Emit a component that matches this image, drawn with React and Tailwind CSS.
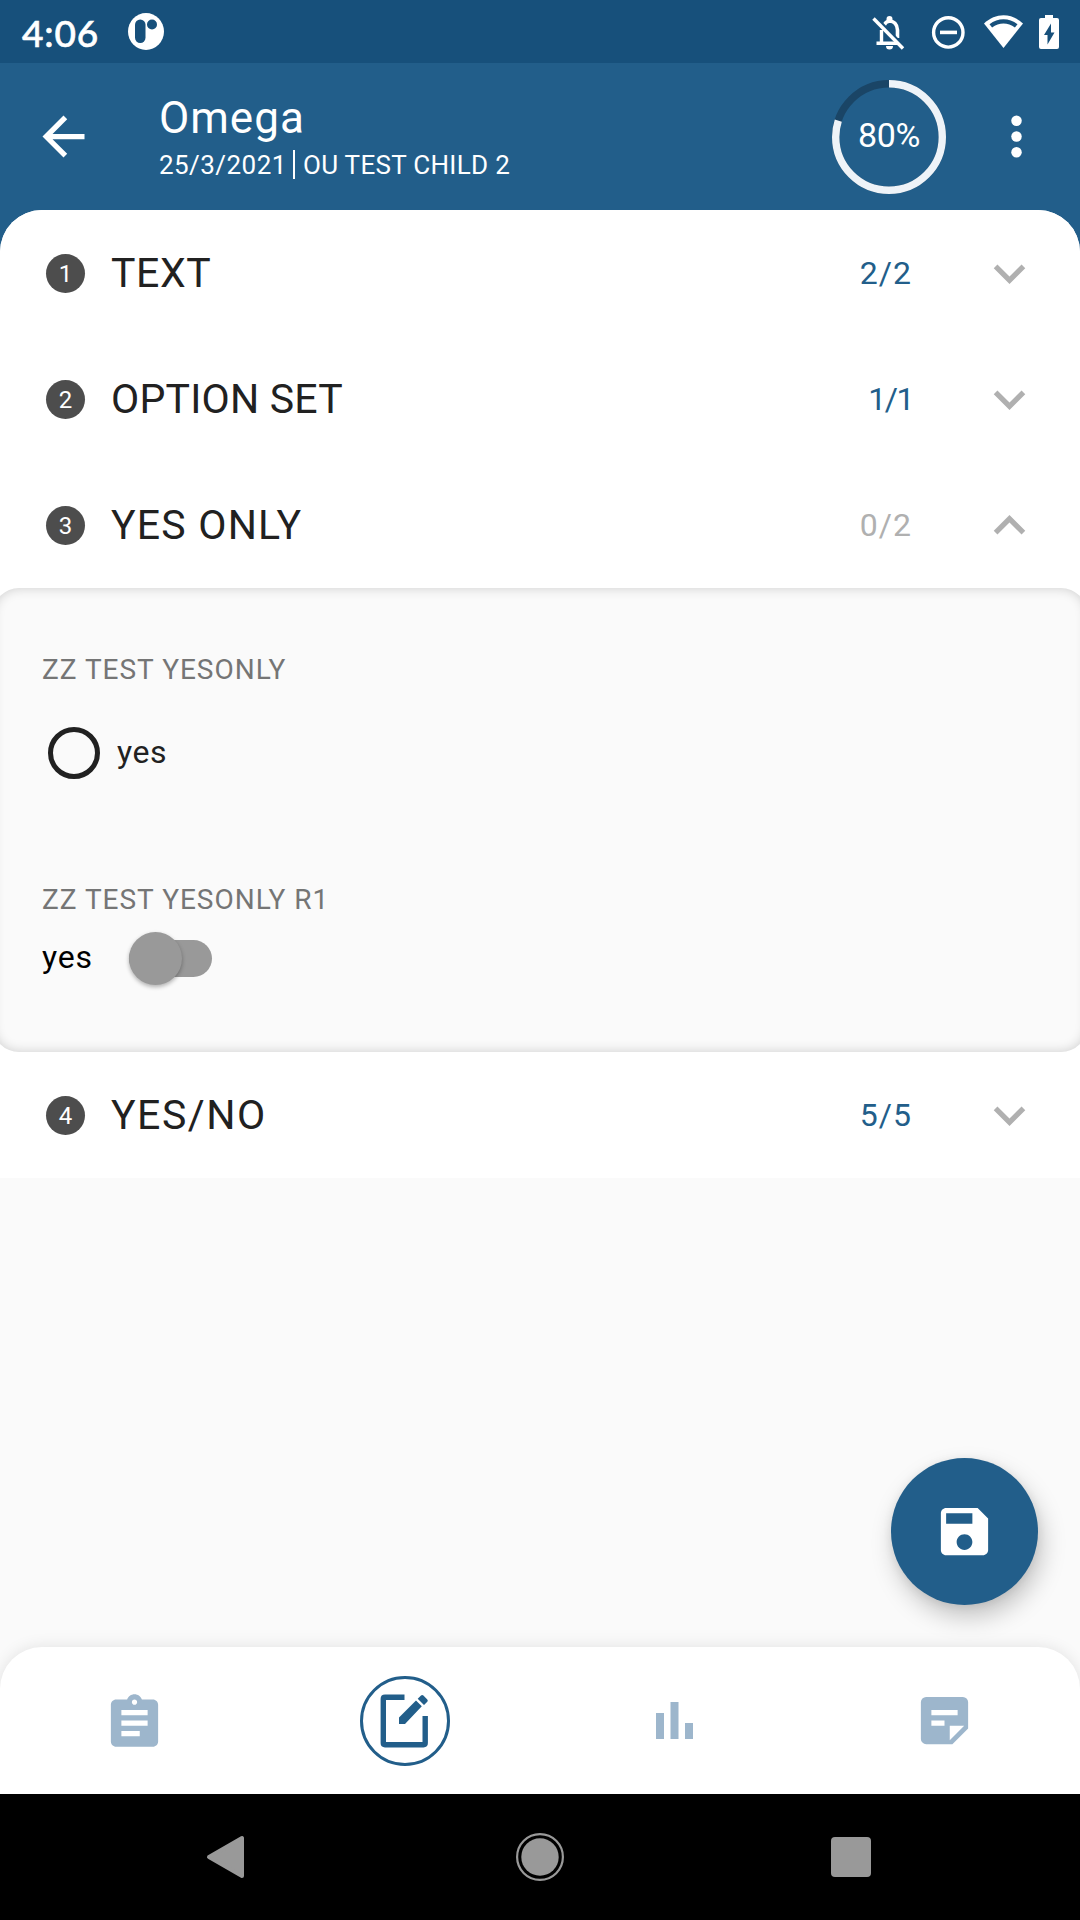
import React from "react";

const sections = [
  { n: 1, title: "TEXT", count: "2/2", titleClass: "tracking-[0.6px]", countClass: "tracking-[1px] mr-[-1px] text-[#225e8a]" },
  { n: 2, title: "OPTION SET", count: "1/1", titleClass: "tracking-[0.2px]", countClass: "tracking-[-1.5px] mr-[-2px] text-[#225e8a]" },
  { n: 3, title: "YES ONLY", count: "0/2", open: true, titleClass: "tracking-[1.2px]", countClass: "tracking-[1px] mr-[-1px] text-[#b0b0b0]" },
  { n: 4, title: "YES/NO", count: "5/5", titleClass: "tracking-[1.5px]", countClass: "tracking-[1px] mr-[-1px] text-[#225e8a]" },
];

function StatusBar() {
  return (
    <div className="flex h-[63px] shrink-0 items-center bg-[#17507b] pl-[22px] text-white">
      <span className="w-[106px] pt-[2px] font-[Lato,sans-serif] text-[37px] leading-none font-medium tracking-[0.8px] [-webkit-text-stroke:0.6px_white]">4:06</span>
      <svg className="h-[37px] w-[36px]" viewBox="0 0 36 37">
        <ellipse cx="18" cy="18.5" rx="18" ry="18.5" fill="#fff" />
        <rect x="7" y="6.5" width="10.5" height="23.5" rx="5.2" fill="#17507b" />
        <circle cx="24" cy="11.5" r="5" fill="#17507b" />
      </svg>
      <svg className="mr-[11px] ml-auto h-[36px] w-[199px]" viewBox="870 13 199 36" fill="none">
        <path d="M881.500 43V29M876.500 42.200h21" stroke="#fff" strokeWidth="3.400" />
        <path d="M884 24.500q1.500-3.800 5.500-4.500 7.500.5 8 9v8" stroke="#fff" strokeWidth="3.600" />
        <path d="M886.500 20v-2a3 3 0 0 1 6 0v2zM886 45h7a3.500 3.500 0 0 1-7 0z" fill="#fff" />
        <path d="M876 16.500l28 29" stroke="#17507b" strokeWidth="3" />
        <path d="M873.500 17.500l29.500 30" stroke="#fff" strokeWidth="3.400" />
        <circle cx="948.300" cy="31.400" r="14.700" stroke="#fff" strokeWidth="3.400" />
        <path d="M940 31.400h17" stroke="#fff" strokeWidth="3.600" />
        <path d="M984 22.500c11.500-11 27.500-11 39 0L1003.500 47z" fill="#fff" />
        <path d="M989.500 23.200c8.500-6.600 19.500-6.600 28 0l-2.600 3.300c-7-5.200-15.800-5.200-22.800 0z" fill="#17507b" />
        <path d="M1045 14h8v3h4q2 0 2 2v27q0 2-2 2h-16q-2 0-2-2V19q0-2 2-2h4z" fill="#fff" />
        <path d="M1051 22.500v9h3.500l-7 12v-9.500h-3.500z" fill="#17507b" />
      </svg>
    </div>
  );
}

function Header() {
  return (
    <header className="flex h-[147px] shrink-0 items-center text-white">
      <svg className="ml-[32px] size-[63px]" viewBox="0 0 24 24" fill="#fff">
        <path d="M20 11H7.830l5.590-5.590L12 4l-8 8 8 8 1.410-1.410L7.830 13H20v-2z" />
      </svg>
      <div className="ml-[64px] flex flex-1 flex-col">
        <h1 className="text-[44px] leading-[52px] font-normal tracking-[1px]">Omega</h1>
        <div className="mt-[1px] flex h-[36px] items-center text-[26px] leading-none">
          <span className="w-[134px] pt-[4px] tracking-[0.450px]">25/3/2021</span>
          <span className="mt-[2px] h-[29px] w-[2px] bg-white" />
          <span className="ml-[8px] pt-[4px] tracking-[0.300px]">OU TEST CHILD 2</span>
        </div>
      </div>
      <div className="grid size-[114px] place-items-center">
        <svg className="col-start-1 row-start-1 size-[114px]" viewBox="0 0 114 114" fill="none">
          <circle cx="57" cy="57" r="53.300" stroke="#1a4566" strokeWidth="7.400" />
          <circle cx="57" cy="57" r="53.300" stroke="#eef3f8" strokeWidth="7.400" pathLength="100" strokeDasharray="80 20" transform="rotate(-90 57 57)" />
        </svg>
        <span className="col-start-1 row-start-1 pb-[4px] text-[34px] leading-none tracking-[-0.300px]">80%</span>
      </div>
      <svg className="mr-[32px] ml-[39px] size-[63px]" viewBox="0 0 24 24" fill="#fff">
        <circle cx="12" cy="6" r="2" />
        <circle cx="12" cy="12" r="2" />
        <circle cx="12" cy="18" r="2" />
      </svg>
    </header>
  );
}

function SectionRow({ n, title, count, open, titleClass, countClass }) {
  return (
    <div className="flex h-[126px] items-center bg-white pr-[39px] pl-[46px]">
      <span className="flex size-[39px] items-center justify-center rounded-full bg-[#4d4d4d] pt-[2px] text-[24px] leading-none text-white">{n}</span>
      <span className={`ml-[26px] flex-1 text-[41px] leading-none text-[#212121] ${titleClass}`}>{title}</span>
      <span className={`text-[32px] leading-none ${countClass}`}>{count}</span>
      <svg className="ml-[67px] size-[63px]" viewBox="0 0 24 24" fill="#b0b0b0">
        {open ? (
          <path d="M12 8l-6 6 1.410 1.410L12 10.830l4.590 4.580L18 14z" />
        ) : (
          <path d="M16.590 8.590L12 13.170 7.410 8.590 6 10l6 6 6-6z" />
        )}
      </svg>
    </div>
  );
}

function OpenPanel() {
  return (
    <div className="h-[464px] overflow-hidden bg-white">
      <div className="mx-[-7px] flex h-full flex-col rounded-[26px] bg-[#fafafa] pl-[49px] shadow-[inset_0_0_12px_rgba(0,0,0,0.180)]">
        <span className="mt-[68px] text-[28px] leading-[28px] tracking-[0.980px] text-[#757575]">ZZ TEST YESONLY</span>
        <div className="mt-[42px] flex h-[53px] items-center pl-[6px]">
          <span className="size-[52px] rounded-full border-[5px] border-[#212121]" />
          <span className="ml-[17px] pb-[2px] text-[32px] leading-none tracking-[0.600px] text-[#212121]">yes</span>
        </div>
        <span className="mt-[107px] text-[28px] leading-[28px] tracking-[0.980px] text-[#757575]">ZZ TEST YESONLY R1</span>
        <div className="mt-[18px] flex h-[53px] items-center text-black">
          <span className="w-[87px] pb-[3px] text-[32px] leading-none tracking-[0.800px]">yes</span>
          <span className="flex h-[37px] w-[83px] items-center rounded-full bg-[#999]">
            <span className="size-[53px] shrink-0 rounded-full bg-[#999] shadow-[0_2px_4px_rgba(0,0,0,0.300)]" />
          </span>
        </div>
      </div>
    </div>
  );
}

function TabBar() {
  return (
    <nav className="relative grid h-[147px] shrink-0 grid-cols-4 place-items-center rounded-t-[42px] bg-white shadow-[0_0_16px_rgba(0,0,0,0.100)]">
      <svg className="mr-[2px] size-[63px]" viewBox="0 0 24 24" fill="#9db6cc">
        <path d="M19 4h-4.180C14.400 2.840 13.300 2 12 2s-2.400.840-2.820 2H5c-1.100 0-2 .900-2 2v14c0 1.100.900 2 2 2h14c1.100 0 2-.900 2-2V6c0-1.100-.900-2-2-2zm-7 0c.550 0 1 .450 1 1s-.450 1-1 1-1-.450-1-1 .450-1 1-1zm2 14H7v-2h7v2zm3-4H7v-2h10v2zm0-4H7V8h10v2z" />
      </svg>
      <svg className="size-[92px]" viewBox="0 0 92 92" fill="none">
        <circle cx="46" cy="46" r="43.500" stroke="#225e8a" strokeWidth="3" />
        <path d="M45.500 22.200H26q-1.700 0-1.700 1.700V68q0 1.700 1.700 1.700H64.500q1.700 0 1.700-1.700V41" stroke="#225e8a" strokeWidth="5.400" />
        <path d="M40 49v-6.500L57 25.500l5.800 5.800L46 49zM58.700 23.800l3.300-3.300q1.200-1 2.400 0l3.900 3.900q1 1.200 0 2.400l-3.300 3.300z" fill="#225e8a" />
      </svg>
      <svg className="mr-[2px] size-[63px]" viewBox="0 0 63 63" fill="#9db6cc">
        <path d="M13 24h8v26h-8zM27.500 13h8v37h-8zM42 34h8v16h-8z" />
      </svg>
      <svg className="mr-[2px] size-[63px]" viewBox="0 0 24 24" fill="#9db6cc">
        <path fillRule="evenodd" d="M5 3h14a2 2 0 0 1 2 2v10l-6 6H5a2 2 0 0 1-2-2V5a2 2 0 0 1 2-2zM7 8h10v2H7zM7 12h5v2H7zM14 14v5.500l5.500-5.500z" />
      </svg>
    </nav>
  );
}

function SystemBar() {
  return (
    <div className="flex h-[126px] shrink-0 items-center bg-black">
      <svg className="ml-[206px] h-[44px] w-[39px]" viewBox="0 0 39 44">
        <path d="M3 22L36 3v38z" fill="#999" stroke="#999" strokeWidth="4" strokeLinejoin="round" />
      </svg>
      <svg className="ml-[271px] size-[48px]" viewBox="0 0 48 48">
        <circle cx="24" cy="24" r="22.900" fill="none" stroke="#999" strokeWidth="2.200" />
        <circle cx="24" cy="24" r="18.700" fill="#999" />
      </svg>
      <span className="ml-[267px] size-[40px] rounded-[4px] bg-[#999]" />
    </div>
  );
}

export default function App() {
  return (
    <div className="relative flex h-[1920px] w-[1080px] flex-col overflow-hidden bg-[#225e8a] font-[Roboto,sans-serif]">
      <StatusBar />
      <Header />
      <main className="flex-1 overflow-hidden rounded-t-[42px] bg-[#fafafa]">
        {sections.map((s) => (
          <React.Fragment key={s.n}>
            <SectionRow {...s} />
            {s.open && <OpenPanel />}
          </React.Fragment>
        ))}
      </main>
      <div className="bg-[#fafafa]">
        <TabBar />
      </div>
      <SystemBar />
      <button className="absolute right-[42px] bottom-[315px] grid size-[147px] place-items-center rounded-full bg-[#225e8a] shadow-[4px_12px_24px_rgba(0,0,0,0.220),0_2px_10px_rgba(0,0,0,0.080)]">
        <svg className="size-[63px]" viewBox="0 0 24 24" fill="#fff">
          <path d="M17 3H5c-1.110 0-2 .900-2 2v14c0 1.100.890 2 2 2h14c1.100 0 2-.900 2-2V7l-4-4zm-5 16c-1.660 0-3-1.340-3-3s1.340-3 3-3 3 1.340 3 3-1.340 3-3 3zm3-10H5V5h10v4z" />
        </svg>
      </button>
    </div>
  );
}
